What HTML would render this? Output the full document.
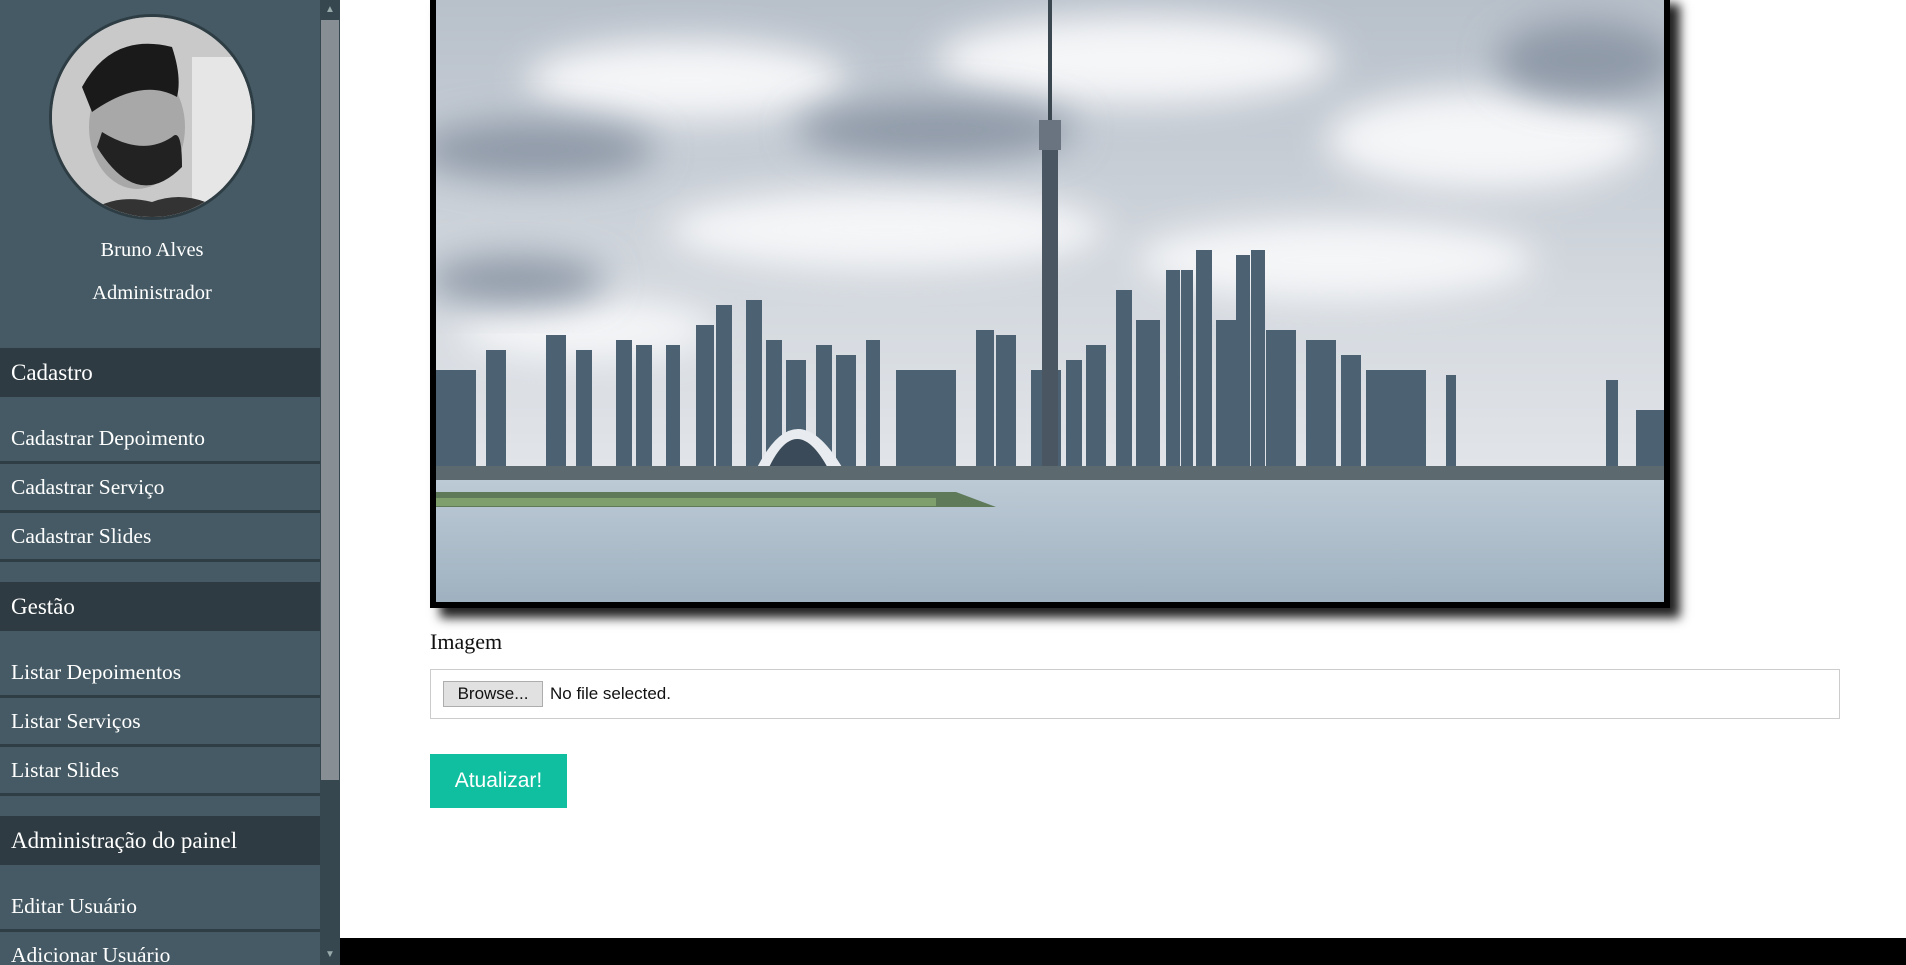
<!DOCTYPE html>
<html><head><meta charset="utf-8"><style>
*{margin:0;padding:0;box-sizing:border-box}
body{width:1906px;height:965px;overflow:hidden;background:#fff;position:relative;font-family:"Liberation Serif",serif}
#side{position:absolute;left:0;top:0;width:320px;height:965px;background:#455a64;color:#fff;overflow:hidden}
#sb{position:absolute;left:320px;top:0;width:20px;height:965px;background:#37474f}
#sb .thumb{position:absolute;left:1px;top:20px;width:18px;height:760px;background:#878f95}
#sb .up{position:absolute;left:0;top:0;width:20px;height:20px;color:#9aa;font:10px sans-serif;text-align:center;line-height:20px}
#sb .dn{position:absolute;left:0;bottom:0;width:20px;height:20px;color:#9aa;font:10px sans-serif;text-align:center;line-height:20px}
.av{position:absolute;left:49px;top:14px;width:206px;height:206px;border-radius:50%;border:3px solid #2e3d44;overflow:hidden;background:#bbb}
.name{position:absolute;left:0;width:304px;text-align:center;font-size:20.5px}
.hd{position:absolute;left:0;width:320px;height:49px;background:#2e3b42;font-size:23px;padding-left:11px;line-height:49px}
.it{position:absolute;left:0;width:320px;height:49px;border-bottom:3px solid #2f3e45;font-size:21.5px;padding-left:11px;line-height:46px}
.frame{position:absolute;left:430px;top:-6px;width:1240px;height:614px;background:#000;box-shadow:10px 10px 10px #222}
.lbl{position:absolute;left:430px;top:629px;font-size:22px;color:#111}
.file{position:absolute;left:430px;top:669px;width:1410px;height:50px;border:1px solid #ccc;background:#fff}
.br{position:absolute;left:12px;top:11px;width:100px;height:26px;background:#e1e1e1;border:1px solid #adadad;font:17px "Liberation Sans",sans-serif;text-align:center;line-height:24px;color:#111}
.nf{position:absolute;left:119px;top:14px;font:17px "Liberation Sans",sans-serif;color:#111}
.btn{position:absolute;left:430px;top:754px;width:137px;height:54px;background:#0fbf9f;color:#fff;font:21px "Liberation Sans",sans-serif;text-align:center;line-height:54px}
.foot{position:absolute;left:340px;top:938px;width:1566px;height:27px;background:#000}
</style></head><body>
<div id="side">
<div class="av"><svg width="200" height="200" viewBox="0 0 200 200"><rect width="200" height="200" fill="#c9c9c9"/><rect x="140" y="40" width="60" height="160" fill="#e6e6e6"/><ellipse cx="85" cy="110" rx="48" ry="62" fill="#a8a8a8"/><path d="M30 70 Q60 15 120 30 Q130 60 125 80 Q90 60 40 95Z" fill="#1a1a1a"/><path d="M45 130 Q85 195 130 150 Q130 110 120 120 Q90 140 50 115Z" fill="#222"/><path d="M30 200 Q60 175 100 185 Q140 170 180 200Z" fill="#333"/></svg></div>
<div class="name" style="top:239px">Bruno Alves</div>
<div class="name" style="top:282px">Administrador</div>
<div class="hd" style="top:348px">Cadastro</div>
<div class="it" style="top:415px">Cadastrar Depoimento</div>
<div class="it" style="top:464px">Cadastrar Serviço</div>
<div class="it" style="top:513px">Cadastrar Slides</div>
<div class="hd" style="top:582px">Gestão</div>
<div class="it" style="top:649px">Listar Depoimentos</div>
<div class="it" style="top:698px">Listar Serviços</div>
<div class="it" style="top:747px">Listar Slides</div>
<div class="hd" style="top:816px">Administração do painel</div>
<div class="it" style="top:883px">Editar Usuário</div>
<div class="it" style="top:932px">Adicionar Usuário</div>
</div>
<div id="sb"><div class="thumb"></div><div class="up">&#9650;</div><div class="dn">&#9660;</div></div>
<div class="frame"><svg style="position:absolute;left:6px;top:6px" width="1228" height="602" viewBox="0 0 1228 602" preserveAspectRatio="none">
<defs><linearGradient id="s" x1="0" y1="0" x2="0" y2="1"><stop offset="0" stop-color="#b8c0ca"/><stop offset="0.5" stop-color="#d4d9df"/><stop offset="1" stop-color="#eceef1"/></linearGradient>
<linearGradient id="w" x1="0" y1="0" x2="0" y2="1"><stop offset="0" stop-color="#bccad5"/><stop offset="1" stop-color="#9fb1c0"/></linearGradient>
<filter id="b"><feGaussianBlur stdDeviation="18"/></filter></defs>
<rect width="1228" height="602" fill="url(#s)"/>
<g filter="url(#b)" fill="#f5f6f8"><ellipse cx="250" cy="80" rx="160" ry="40"/><ellipse cx="700" cy="60" rx="200" ry="45"/><ellipse cx="1050" cy="140" rx="160" ry="50"/><ellipse cx="450" cy="230" rx="220" ry="40"/><ellipse cx="900" cy="260" rx="200" ry="40"/><ellipse cx="150" cy="330" rx="130" ry="30"/></g>
<g filter="url(#b)" fill="#8f9aa8"><ellipse cx="100" cy="150" rx="120" ry="30"/><ellipse cx="500" cy="130" rx="140" ry="30"/><ellipse cx="1150" cy="60" rx="90" ry="40"/><ellipse cx="80" cy="280" rx="90" ry="25"/></g>
<g fill="#4c6172">
<rect x="0" y="370" width="40" height="104"/><rect x="50" y="350" width="20" height="124"/><rect x="110" y="335" width="20" height="139"/><rect x="140" y="350" width="16" height="124"/><rect x="180" y="340" width="16" height="134"/><rect x="200" y="345" width="16" height="129"/><rect x="230" y="345" width="14" height="129"/><rect x="260" y="325" width="18" height="149"/><rect x="280" y="305" width="16" height="169"/><rect x="310" y="300" width="16" height="174"/><rect x="330" y="340" width="16" height="134"/><rect x="350" y="360" width="20" height="114"/><rect x="380" y="345" width="16" height="129"/><rect x="400" y="355" width="20" height="119"/><rect x="430" y="340" width="14" height="134"/><rect x="460" y="370" width="60" height="104"/><rect x="540" y="330" width="18" height="144"/><rect x="560" y="335" width="20" height="139"/><rect x="595" y="370" width="30" height="104"/><rect x="630" y="360" width="16" height="114"/><rect x="650" y="345" width="20" height="129"/><rect x="680" y="290" width="16" height="184"/><rect x="700" y="320" width="24" height="154"/><rect x="730" y="270" width="14" height="204"/><rect x="745" y="270" width="12" height="204"/><rect x="760" y="250" width="16" height="224"/><rect x="780" y="320" width="20" height="154"/><rect x="800" y="255" width="14" height="219"/><rect x="815" y="250" width="14" height="224"/><rect x="830" y="330" width="30" height="144"/><rect x="870" y="340" width="30" height="134"/><rect x="905" y="355" width="20" height="119"/><rect x="930" y="370" width="60" height="104"/><rect x="1010" y="375" width="10" height="99"/><rect x="1170" y="380" width="12" height="94"/><rect x="1200" y="410" width="28" height="64"/></g>
<path d="M318 474 Q360 384 410 474Z" fill="#e8ecf0"/><path d="M330 474 Q360 404 395 474Z" fill="#3a4a58"/>
<rect x="612" y="0" width="4" height="474" fill="#3a4650"/><rect x="606" y="130" width="16" height="344" fill="#4a5662"/><rect x="603" y="120" width="22" height="30" fill="#6a7480"/>
<rect x="0" y="466" width="1228" height="14" fill="#5c6a70"/>
<rect x="0" y="480" width="1228" height="122" fill="url(#w)"/>
<path d="M0 492 L520 492 L560 507 L0 507Z" fill="#5f7a58"/><rect x="0" y="498" width="500" height="8" fill="#7f9f6c"/>
</svg></div>
<div class="lbl">Imagem</div>
<div class="file"><div class="br">Browse...</div><div class="nf">No file selected.</div></div>
<div class="btn">Atualizar!</div>
<div class="foot"></div>
</body></html>
